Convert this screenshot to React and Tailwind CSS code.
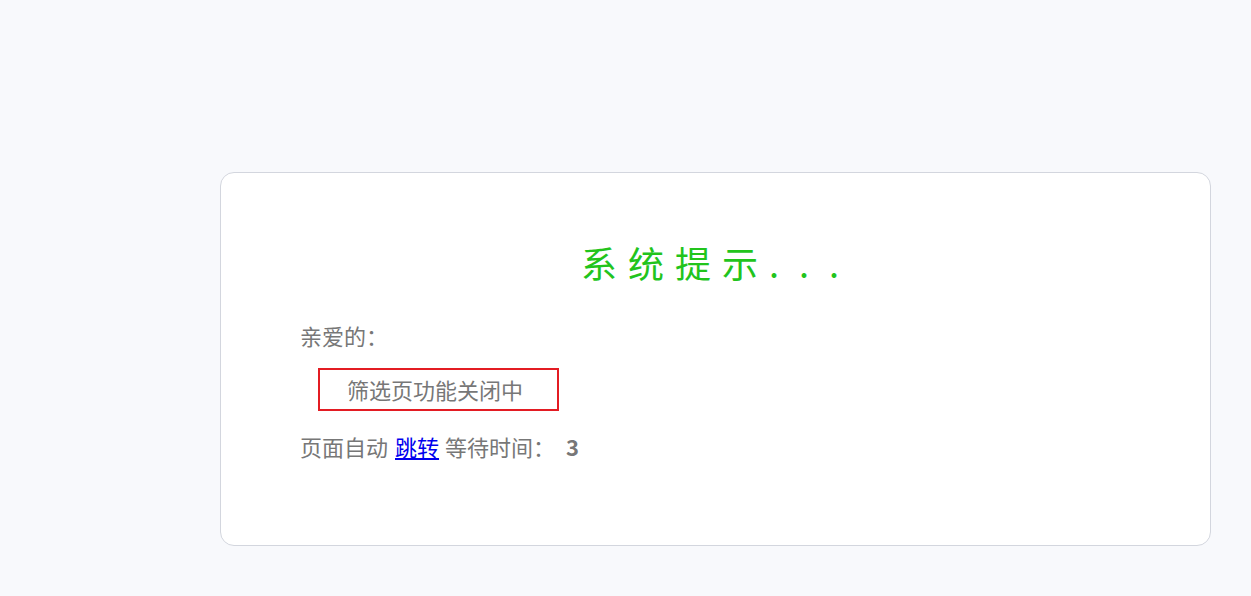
export default function App() {
  const font = { fontFamily: '"Noto Sans CJK SC", "Noto Sans", sans-serif' };
  return (
    <div className="min-h-[596px] w-full bg-[#f8f9fc] pt-[172px] pl-[220px]" style={font}>
      <div className="box-border h-[374px] w-[991px] rounded-[14px] border border-[#d3d6de] bg-white pt-[59px] pl-[79px]">
        <div className="flex justify-center pr-[70px] text-[36px] leading-[60px] text-[#22c41c]">
          <span className="tracking-[11px]">系统提示</span>
          <span className="tracking-[20px]">...</span>
        </div>
        <div className="mt-[28px] text-[22px] leading-[30px] text-[#777777]">亲爱的：</div>
        <div className="mt-[18px] ml-[18px] box-border flex h-[43px] w-[241px] items-center border-2 border-[#e31c23] pl-[27px] text-[22px] text-[#777777]">
          筛选页功能关闭中
        </div>
        <div className="mt-[20px] flex items-center text-[22px] leading-[30px] text-[#777777]">
          <span>页面自动</span>
          <a href="#" className="ml-[7px] text-[#0000ee] underline">跳转</a>
          <span className="ml-[6px]">等待时间：</span>
          <span className="ml-[11px] font-bold">3</span>
        </div>
      </div>
    </div>
  );
}
